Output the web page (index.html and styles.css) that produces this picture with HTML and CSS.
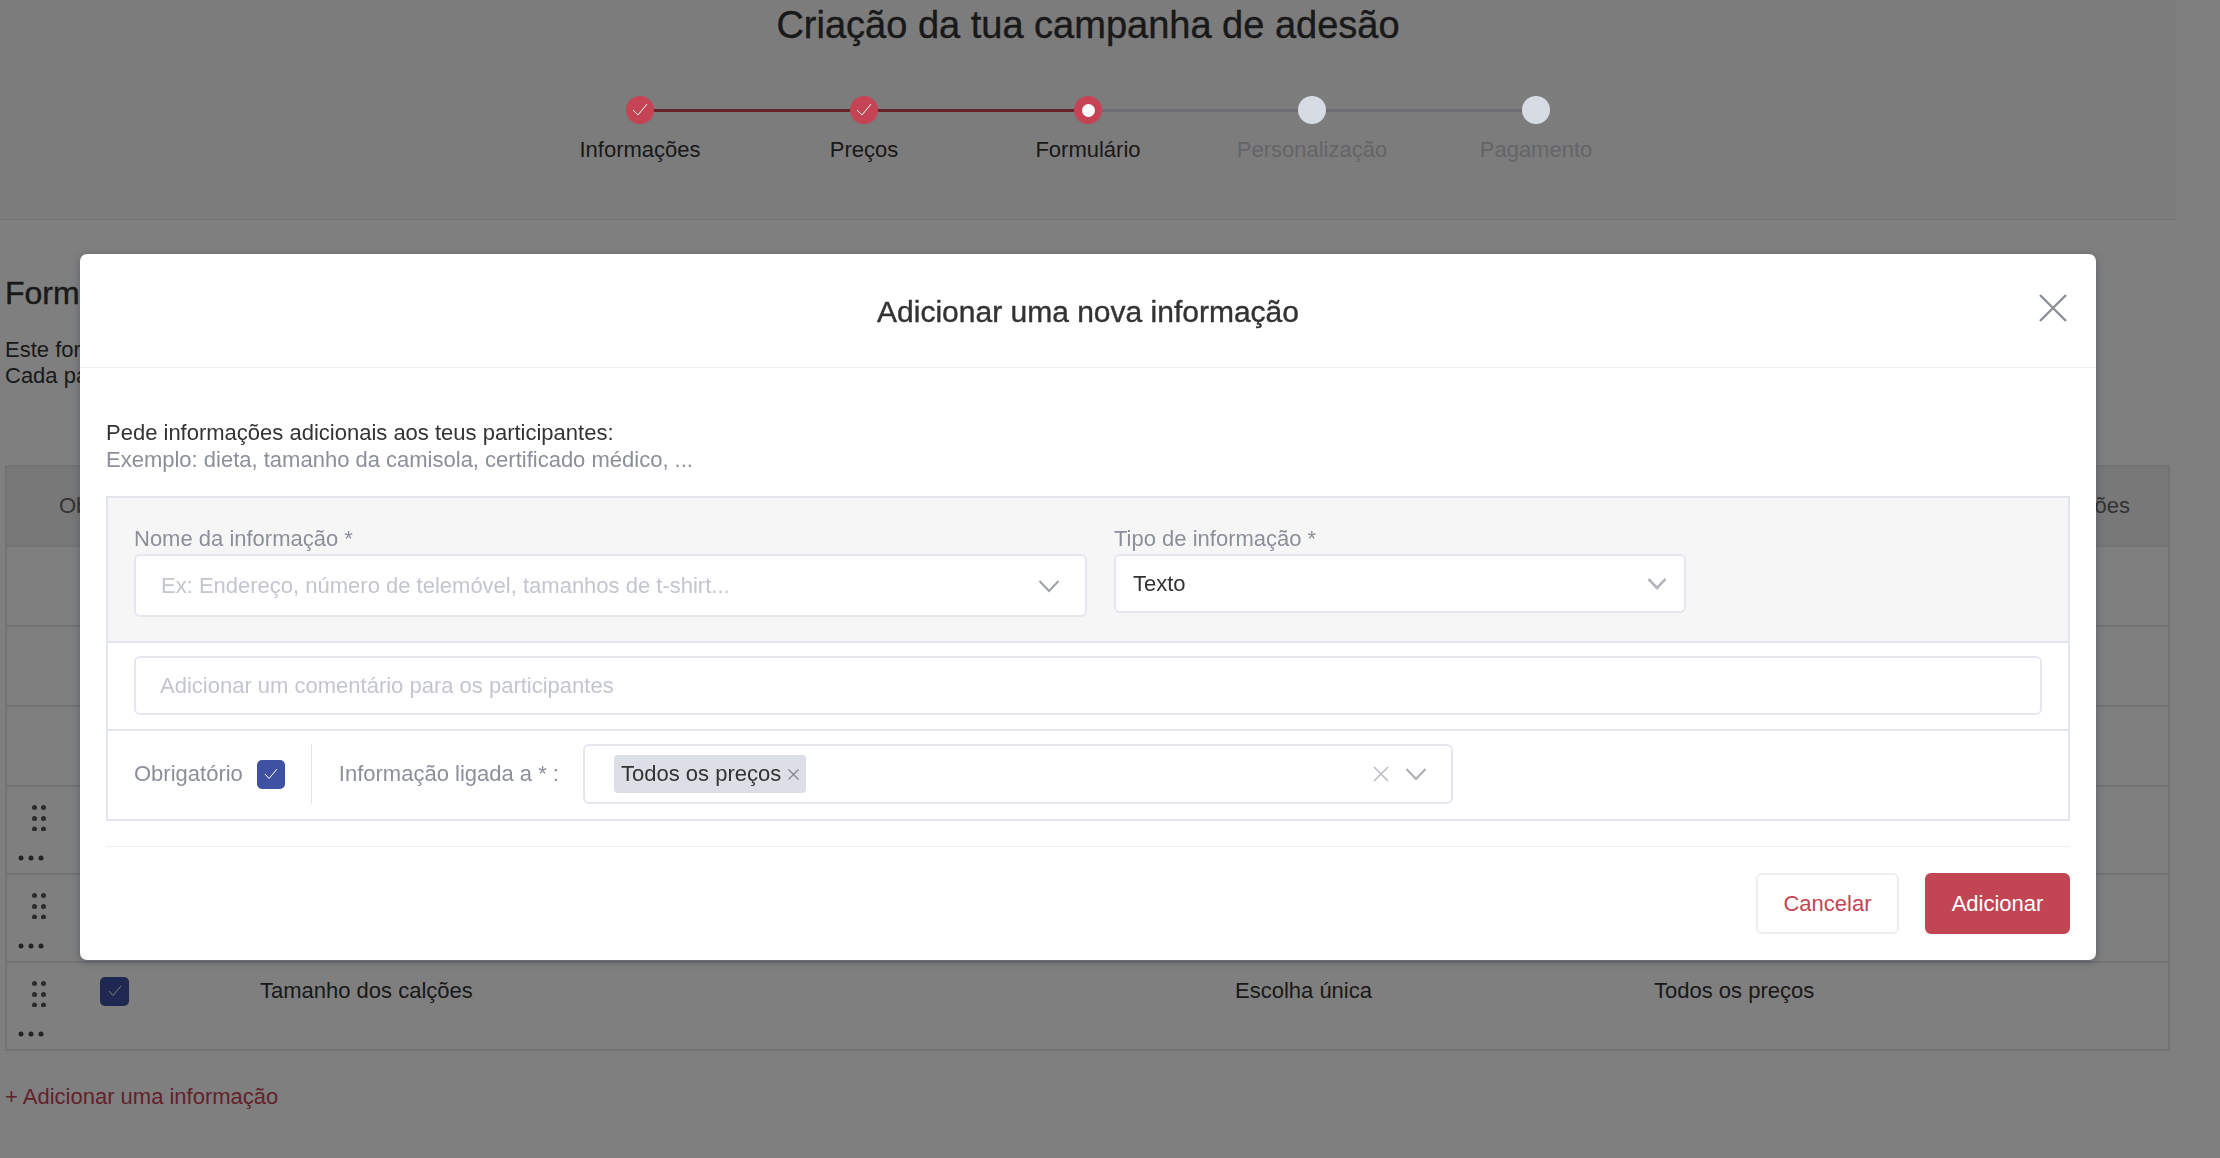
FILE: index.html
```html
<!DOCTYPE html>
<html lang="pt">
<head>
  <meta charset="UTF-8">
  <title>Criação da tua campanha de adesão</title>
  <link rel="stylesheet" href="styles.css">
</head>
<body>
  <div class="page">
    <header class="top">
      <h1 class="top-title">Criação da tua campanha de adesão</h1>
      <div class="steps">
        <div class="step done">
          <span class="dot"><svg width="16" height="14" viewBox="0 0 16 14"><path d="M1 7l5 5 9-11" fill="none" stroke="#fff" stroke-width="1"/></svg></span>
          <span class="step-name">Informações</span>
        </div>
        <div class="step done">
          <span class="dot"><svg width="16" height="14" viewBox="0 0 16 14"><path d="M1 7l5 5 9-11" fill="none" stroke="#fff" stroke-width="1"/></svg></span>
          <span class="step-name">Preços</span>
        </div>
        <div class="step current">
          <span class="dot"><span class="hole"></span></span>
          <span class="step-name">Formulário</span>
        </div>
        <div class="step">
          <span class="dot"></span>
          <span class="step-name">Personalização</span>
        </div>
        <div class="step">
          <span class="dot"></span>
          <span class="step-name">Pagamento</span>
        </div>
      </div>
    </header>

    <section class="form-section">
      <h2 class="section-title">Formulário</h2>
      <p class="section-text">Este formulário será preenchido pelos participantes.<br>Cada participante responde às informações pedidas.</p>

      <div class="table">
        <div class="table-head"><span>Obrigatório</span><span>Ações</span></div>
        <div class="table-row short"></div>
        <div class="table-row short"></div>
        <div class="table-row short"></div>
        <div class="table-row">
          <svg class="drag" width="14" height="26" viewBox="0 0 14 26"><g fill="#55575c"><circle cx="2.5" cy="2.5" r="2.5"/><circle cx="11.5" cy="2.5" r="2.5"/><circle cx="2.5" cy="13.5" r="2.5"/><circle cx="11.5" cy="13.5" r="2.5"/><circle cx="2.5" cy="24" r="2.5"/><circle cx="11.5" cy="24" r="2.5"/></g></svg>
          <span class="cell-check"></span><span></span><span></span><span></span>
          <svg class="more" width="26" height="6" viewBox="0 0 26 6"><g fill="#45474c"><circle cx="3" cy="3" r="2.5"/><circle cx="13" cy="3" r="2.5"/><circle cx="23" cy="3" r="2.5"/></g></svg>
        </div>
        <div class="table-row">
          <svg class="drag" width="14" height="26" viewBox="0 0 14 26"><g fill="#55575c"><circle cx="2.5" cy="2.5" r="2.5"/><circle cx="11.5" cy="2.5" r="2.5"/><circle cx="2.5" cy="13.5" r="2.5"/><circle cx="11.5" cy="13.5" r="2.5"/><circle cx="2.5" cy="24" r="2.5"/><circle cx="11.5" cy="24" r="2.5"/></g></svg>
          <span class="cell-check"></span><span></span><span></span><span></span>
          <svg class="more" width="26" height="6" viewBox="0 0 26 6"><g fill="#45474c"><circle cx="3" cy="3" r="2.5"/><circle cx="13" cy="3" r="2.5"/><circle cx="23" cy="3" r="2.5"/></g></svg>
        </div>
        <div class="table-row">
          <svg class="drag" width="14" height="26" viewBox="0 0 14 26"><g fill="#55575c"><circle cx="2.5" cy="2.5" r="2.5"/><circle cx="11.5" cy="2.5" r="2.5"/><circle cx="2.5" cy="13.5" r="2.5"/><circle cx="11.5" cy="13.5" r="2.5"/><circle cx="2.5" cy="24" r="2.5"/><circle cx="11.5" cy="24" r="2.5"/></g></svg>
          <span class="cell-check"><span class="checkbox"><svg width="14" height="12" viewBox="0 0 14 12"><path d="M1 6l4 4.5L13 1" fill="none" stroke="#fff" stroke-width="1"/></svg></span></span>
          <span>Tamanho dos calções</span>
          <span>Escolha única</span>
          <span>Todos os preços</span>
          <svg class="more" width="26" height="6" viewBox="0 0 26 6"><g fill="#45474c"><circle cx="3" cy="3" r="2.5"/><circle cx="13" cy="3" r="2.5"/><circle cx="23" cy="3" r="2.5"/></g></svg>
        </div>
      </div>

      <a class="add-link">+ Adicionar uma informação</a>
    </section>
  </div>

  <div class="overlay"></div>

  <div class="modal">
    <div class="modal-head">
      <h3 class="modal-title">Adicionar uma nova informação</h3>
      <svg class="modal-close" width="30" height="30" viewBox="0 0 30 30"><path d="M2 2l26 26M28 2L2 28" fill="none" stroke="#8b9099" stroke-width="2.4"/></svg>
    </div>

    <div class="modal-body">
      <p class="intro">Pede informações adicionais aos teus participantes:</p>
      <p class="intro muted">Exemplo: dieta, tamanho da camisola, certificado médico, ...</p>

      <div class="panel">
        <div class="panel-row fields">
          <div class="field name-field">
            <label class="field-label">Nome da informação *</label>
            <div class="input tall placeholder">
              <span>Ex: Endereço, número de telemóvel, tamanhos de t-shirt...</span>
              <svg width="22" height="14" viewBox="0 0 22 14"><path d="M1.5 2L11 12l9.500-10" fill="none" stroke="#9da1a9" stroke-width="2"/></svg>
            </div>
          </div>
          <div class="field type-field">
            <label class="field-label">Tipo de informação *</label>
            <div class="input type-input">
              <span>Texto</span>
              <svg width="20" height="13" viewBox="0 0 20 13"><path d="M1.500 2L10 11l8.500-9" fill="none" stroke="#b4b7bd" stroke-width="2.600"/></svg>
            </div>
          </div>
        </div>

        <div class="panel-row comment-row">
          <div class="input comment placeholder"><span>Adicionar um comentário para os participantes</span></div>
        </div>

        <div class="panel-row link-row">
          <span class="field-label">Obrigatório</span>
          <span class="checkbox bright"><svg width="14" height="12" viewBox="0 0 14 12"><path d="M1 6l4 4.500L13 1" fill="none" stroke="#fff" stroke-width="1"/></svg></span>
          <span class="vline"></span>
          <span class="field-label">Informação ligada a * :</span>
          <div class="multi">
            <span class="tag">Todos os preços<svg width="13" height="13" viewBox="0 0 13 13"><path d="M1.500 1.500l10 10M11.500 1.500l-10 10" fill="none" stroke="#83868d" stroke-width="1.300"/></svg></span>
            <span class="multi-icons">
              <svg width="18" height="18" viewBox="0 0 18 18"><path d="M2 2l14 14M16 2L2 16" fill="none" stroke="#b9bcc3" stroke-width="1.500"/></svg>
              <svg width="22" height="14" viewBox="0 0 22 14"><path d="M1.500 2L11 12l9.500-10" fill="none" stroke="#a9adb5" stroke-width="2"/></svg>
            </span>
          </div>
        </div>
      </div>

      <div class="modal-foot">
        <button class="btn">Cancelar</button>
        <button class="btn primary">Adicionar</button>
      </div>
    </div>
  </div>
</body>
</html>
```

FILE: styles.css
```css
* {
  box-sizing: border-box;
}

html, body {
  margin: 0;
  padding: 0;
  height: 1158px;
  overflow: hidden;
}

body {
  background-color: #fff;
  color: #333;
  font-family: "Liberation Sans", Arial, sans-serif;
  font-size: 22px;
}

.page {
  width: 2176px;
}

.top {
  height: 220px;
  background-color: #f9f9f9;
  border-bottom: 1px solid #eaeaea;
}

.top-title {
  margin: 0;
  font-size: 38px;
  font-weight: 400;
  line-height: 50px;
  text-align: center;
  -webkit-text-stroke: 0.4px #333;
}

.steps {
  display: flex;
  justify-content: center;
  margin-top: 46px;
}

.step {
  position: relative;
  width: 224px;
  display: flex;
  flex-direction: column;
  align-items: center;
  color: #c8cad0;
}

.step + .step::before {
  content: "";
  position: absolute;
  top: 13px;
  left: -50%;
  width: 100%;
  height: 3px;
  background-color: #d6dbe4;
}

.step.done + .step::before {
  background-color: #c44454;
}

.dot {
  position: relative;
  z-index: 1;
  width: 28px;
  height: 28px;
  border-radius: 50%;
  background-color: #d6dbe4;
  display: flex;
  align-items: center;
  justify-content: center;
}

.done .dot, .current .dot {
  background-color: #c44454;
}

.hole {
  width: 13px;
  height: 13px;
  border-radius: 50%;
  background-color: #fff;
}

.step-name {
  margin-top: 10px;
  line-height: 32px;
}

.done, .current {
  color: #333;
}

.form-section {
  padding: 53px 0 0 5px;
}

.section-title {
  margin: 0;
  font-size: 32px;
  font-weight: 400;
  line-height: 40px;
  -webkit-text-stroke: 0.4px #333;
}

.section-text {
  margin: 24px 0 0;
  line-height: 26px;
}

.table {
  margin-top: 76px;
  width: 2165px;
  border: 2px solid #e4e6ea;
  border-bottom-width: 2px;
}

.table-head {
  height: 78px;
  background-color: #f1f1f1;
  display: flex;
  align-items: center;
  justify-content: space-between;
  padding: 0 38px 0 52px;
  color: #666;
}

.table-row {
  height: 88px;
  border-top: 2px solid #e4e6ea;
  display: grid;
  grid-template-columns: 93px 160px 975px 419px 1fr;
  align-items: center;
}

.table-row.short {
  height: 80px;
}

.drag {
  margin: 6px 0 0 25px;
}

.more {
  justify-self: end;
  margin-right: 56px;
}

.cell-check {
  display: flex;
}

.checkbox {
  width: 29px;
  height: 29px;
  border-radius: 5px;
  background-color: #3f51a3;
  display: flex;
  align-items: center;
  justify-content: center;
}

.add-link {
  display: block;
  margin-top: 32px;
  color: #c44454;
  line-height: 28px;
}

.overlay {
  position: fixed;
  top: 0;
  left: 0;
  width: 100%;
  height: 100%;
  background-color: rgba(0, 0, 0, 0.5);
}

.modal {
  position: fixed;
  top: 254px;
  left: 80px;
  width: 2016px;
  height: 706px;
  background-color: #fff;
  border-radius: 7px;
  box-shadow: 0 2px 10px rgba(30, 40, 60, 0.35);
}

.modal-head {
  height: 114px;
  display: grid;
  grid-template-columns: 1fr auto 1fr;
  align-items: center;
  border-bottom: 1px solid #f0f0f2;
}

.modal-title {
  grid-column: 2;
  margin: 2px 0 0;
  font-size: 30px;
  font-weight: 400;
  -webkit-text-stroke: 0.4px #333;
}

.modal-close {
  justify-self: end;
  margin: 0 28px 6px 0;
}

.modal-body {
  padding: 51px 26px 0;
}

.intro {
  margin: 0;
  line-height: 27px;
}

.muted {
  color: #8b8f98;
}

.panel {
  margin-top: 23px;
  border: 2px solid #e2e5ec;
}

.panel-row {
  padding: 0 26px;
}

.fields {
  display: flex;
  gap: 27px;
  height: 145px;
  padding-top: 26px;
  background-color: #f6f6f6;
  border-bottom: 2px solid #e2e5ec;
}

.field-label {
  display: block;
  line-height: 30px;
  color: #8b8f98;
}

.name-field {
  width: 953px;
}

.type-field {
  width: 572px;
}

.input {
  height: 59px;
  padding: 0 17px;
  background-color: #fff;
  border: 2px solid #e4e7ed;
  border-radius: 6px;
  display: flex;
  align-items: center;
  justify-content: space-between;
}

.input.tall {
  height: 63px;
  padding: 0 25px 0 25px;
}

.placeholder {
  color: #c3c6cc;
}

.comment-row {
  height: 88px;
  padding-top: 13px;
  border-bottom: 2px solid #e2e5ec;
}

.comment {
  padding-left: 24px;
}

.link-row {
  height: 88px;
  display: flex;
  align-items: center;
  padding-bottom: 2px;
}

.checkbox.bright {
  width: 28px;
  margin-left: 14px;
}

.vline {
  width: 1px;
  height: 60px;
  margin: 0 27px 0 26px;
  background-color: #e2e5ec;
}

.multi {
  width: 870px;
  height: 60px;
  margin-left: 24px;
  padding: 0 24px 0 29px;
  border: 2px solid #e4e7ed;
  border-radius: 6px;
  display: flex;
  align-items: center;
  justify-content: space-between;
}

.tag {
  height: 38px;
  padding: 0 6px 0 7px;
  background-color: #dcdfe6;
  border-radius: 4px;
  display: flex;
  align-items: center;
  gap: 6px;
}

.multi-icons {
  display: flex;
  align-items: center;
  gap: 15px;
}

.modal-foot {
  margin-top: 25px;
  padding-top: 26px;
  border-top: 1px solid #eff0f4;
  display: flex;
  justify-content: flex-end;
  gap: 26px;
}

.btn {
  height: 61px;
  width: 143px;
  padding: 0;
  background-color: #fff;
  border: 2px solid #eceef2;
  border-radius: 6px;
  color: #c24554;
  font-family: inherit;
  font-size: 22px;
}

.btn.primary {
  width: 145px;
  background-color: #c24554;
  border-color: #c24554;
  color: #fff;
}
```
